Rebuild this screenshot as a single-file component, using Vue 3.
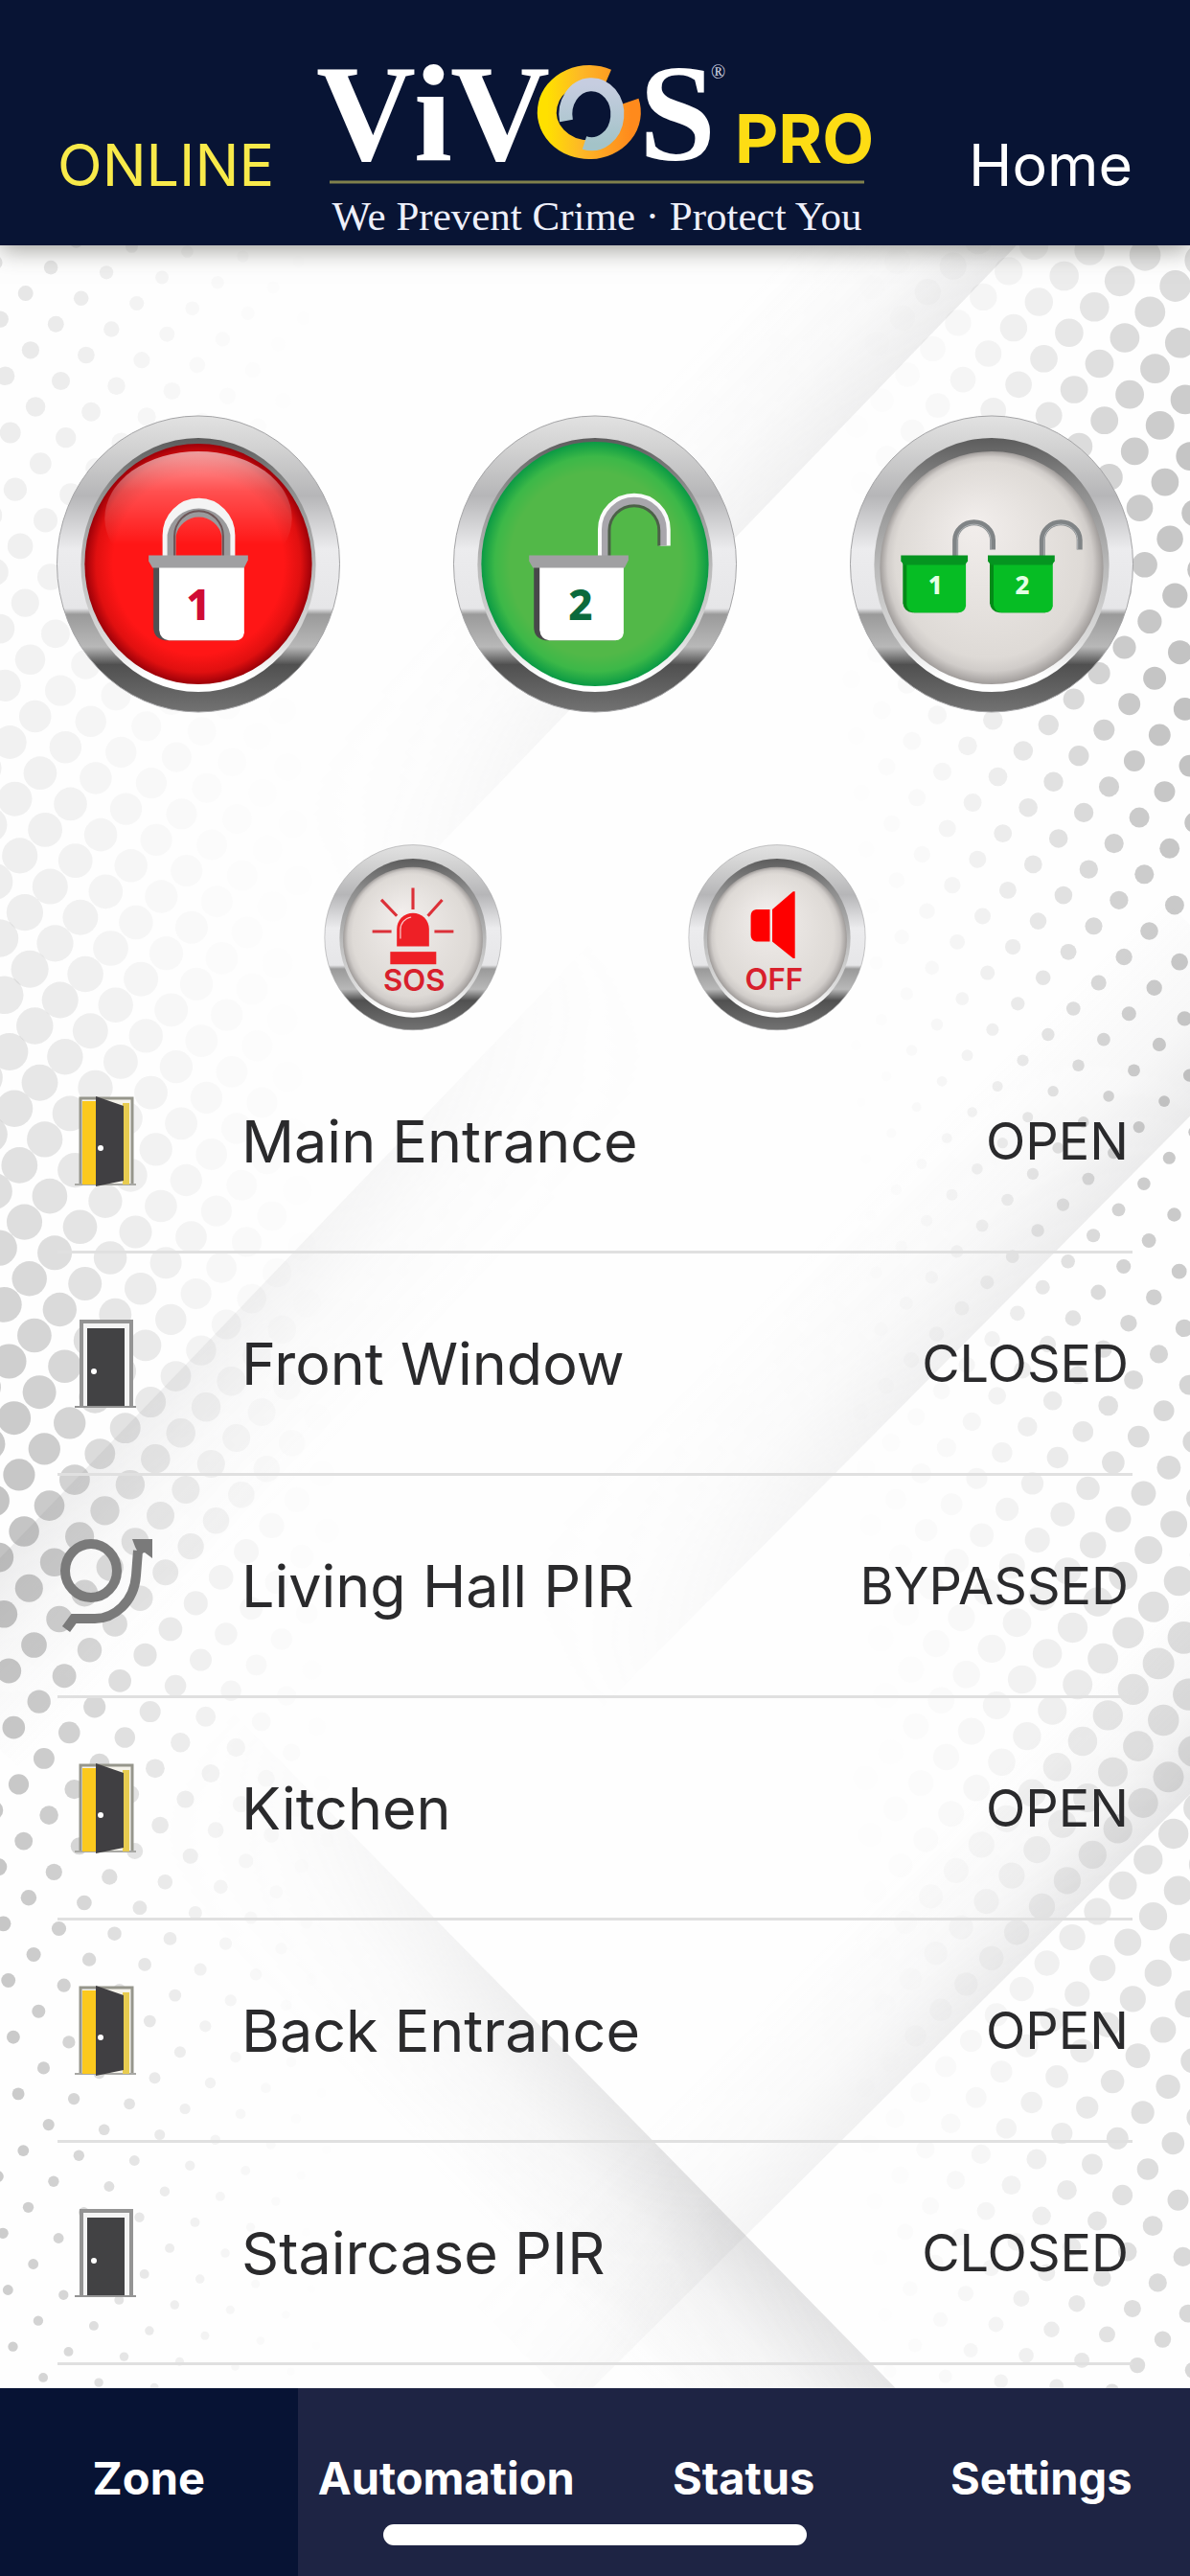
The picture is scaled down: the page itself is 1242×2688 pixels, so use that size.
<template>
  <div class="page">
    <!-- backdrop: soft diagonal folds and halftone dots -->
    <svg class="backdrop" viewBox="0 0 1242 2688" preserveAspectRatio="xMidYMid slice" aria-hidden="true">
      <defs>
        <template v-for="(f, i) in folds" :key="'g' + i">
          <linearGradient
            :id="'fold' + i"
            gradientUnits="userSpaceOnUse"
            :x1="f.a[0]"
            :y1="f.a[1]"
            :x2="f.a[0] + f.depth[0]"
            :y2="f.a[1] + f.depth[1]"
          >
            <stop offset="0" stop-color="#8a8a8e" :stop-opacity="f.shade" />
            <stop offset="0.4" stop-color="#8a8a8e" :stop-opacity="f.shade * 0.35" />
            <stop offset="1" stop-color="#8a8a8e" stop-opacity="0" />
          </linearGradient>
          <linearGradient
            :id="'along' + i"
            gradientUnits="userSpaceOnUse"
            :x1="f.a[0]"
            :y1="f.a[1]"
            :x2="f.b[0]"
            :y2="f.b[1]"
          >
            <stop v-for="s in f.along" :key="s[0]" :offset="s[0]" stop-color="#fff" :stop-opacity="s[1]" />
          </linearGradient>
          <mask :id="'mask' + i" maskUnits="userSpaceOnUse" x="-200" y="0" width="1642" height="2688">
            <rect x="-200" y="0" width="1642" height="2688" :fill="`url(#along${i})`" />
          </mask>
        </template>
        <linearGradient id="bezelRim" x1="0" y1="0" x2="0" y2="1">
          <stop offset="0" stop-color="#e2e2e2" />
          <stop offset="0.12" stop-color="#d0d0d0" />
          <stop offset="0.27" stop-color="#b6b6b8" />
          <stop offset="0.45" stop-color="#ececee" />
          <stop offset="0.65" stop-color="#e6e6e8" />
          <stop offset="0.67" stop-color="#9a9a9a" />
          <stop offset="0.78" stop-color="#b8b8b8" />
          <stop offset="0.84" stop-color="#505050" />
          <stop offset="1" stop-color="#727272" />
        </linearGradient>
        <linearGradient id="bezelLip" x1="0" y1="0" x2="0" y2="1">
          <stop offset="0" stop-color="#5c5c5c" />
          <stop offset="0.2" stop-color="#8c8c8c" />
          <stop offset="0.5" stop-color="#b8b8b8" />
          <stop offset="0.8" stop-color="#dcdcdc" />
          <stop offset="0.94" stop-color="#ffffff" />
        </linearGradient>
        <radialGradient id="faceRed">
          <stop offset="0.75" stop-color="#ff1616" />
          <stop offset="0.9" stop-color="#e01010" />
          <stop offset="1" stop-color="#9c0008" />
        </radialGradient>
        <radialGradient id="faceGreen">
          <stop offset="0.75" stop-color="#52b848" />
          <stop offset="0.88" stop-color="#3cb848" />
          <stop offset="1" stop-color="#0a9a44" />
        </radialGradient>
        <radialGradient id="faceGrey" cx="0.5" cy="0.5" r="0.5" fx="0.42" fy="0.3">
          <stop offset="0" stop-color="#f2eeec" />
          <stop offset="0.84" stop-color="#dedad6" />
          <stop offset="0.92" stop-color="#d0ccc9" />
          <stop offset="1" stop-color="#a09c9a" />
        </radialGradient>
        <linearGradient id="gloss" x1="0" y1="0" x2="0" y2="1">
          <stop offset="0" stop-color="#ffffff" stop-opacity="0.6" />
          <stop offset="0.3" stop-color="#ffffff" stop-opacity="0.25" />
          <stop offset="0.7" stop-color="#ffffff" stop-opacity="0" />
        </linearGradient>
        <symbol id="bezel" viewBox="0 0 298 313">
          <ellipse cx="149" cy="156" rx="148" ry="155" fill="url(#bezelRim)" stroke="#a4a4a6" stroke-width="1" />
          <ellipse cx="149" cy="157" rx="123" ry="133" fill="url(#bezelLip)" />
        </symbol>
      </defs>
      <polygon
        v-for="(f, i) in folds"
        :key="'f' + i"
        :points="foldPoints(f)"
        :fill="`url(#fold${i})`"
        :mask="`url(#mask${i})`"
      />
      <circle
        v-for="(d, i) in dots"
        :key="'d' + i"
        :cx="d.x"
        :cy="d.y"
        :r="d.r"
        fill="#8c8c8c"
        :fill-opacity="d.o"
      />
    </svg>

    <header class="top-bar">
      <span class="connection">ONLINE</span>
      <svg class="logo" viewBox="0 -40 600 230" role="img" aria-label="ViVOS PRO">
        <defs>
          <linearGradient id="ringWarm" x1="0" y1="0" x2="1" y2="0">
            <stop offset="0" stop-color="#ffe000" />
            <stop offset="0.4" stop-color="#fdb827" />
            <stop offset="1" stop-color="#ff8a1c" />
          </linearGradient>
          <linearGradient id="ringCool" x1="0" y1="0" x2="0" y2="1">
            <stop offset="0" stop-color="#c6cde0" />
            <stop offset="1" stop-color="#a3c3c8" />
          </linearGradient>
        </defs>
        <g class="logo-name">
          <text x="9" y="107">V</text>
          <text x="111" y="107">i</text>
          <text x="149" y="107">V</text>
          <text x="346" y="107">S</text>
        </g>
        <path d="M313 22 A44 39 0 1 0 336 46" fill="none" stroke="url(#ringWarm)" stroke-width="20" />
        <path d="M270 66 A27 31 0 1 1 289 89" fill="none" stroke="url(#ringCool)" stroke-width="14" />
        <text class="logo-mark" x="421" y="22">®</text>
        <text class="logo-pro" x="446" y="110">PRO</text>
        <path d="M23 130 H581" stroke="#80804c" stroke-width="3" />
        <text class="logo-tagline" x="302" y="180" text-anchor="middle">We Prevent Crime · Protect You</text>
      </svg>
      <h1 class="screen-title">Home</h1>
    </header>

    <main class="content">
      <div class="partitions">
        <button class="round-btn" aria-label="Partition 1 armed">
          <svg viewBox="0 0 298 313">
            <use href="#bezel" />
            <ellipse cx="149" cy="156" rx="119" ry="126" fill="url(#faceRed)" />
            <ellipse cx="149" cy="108" rx="98" ry="70" fill="url(#gloss)" />
            <g fill="none">
              <path d="M118 150 V126 A31 32 0 0 1 181 126 V150" stroke="#f4f4f4" stroke-width="13" />
              <path d="M121 150 V126 A29 29 0 0 1 178 126 V150" stroke="#9a9a9c" stroke-width="9" />
              <path d="M124 150 V127 A25 26 0 0 1 175 127 V150" stroke="#6c5557" stroke-width="2" />
            </g>
            <path d="M102 158 H190 V236 H114 Q102 234 102 222 Z" fill="#505052" />
            <path d="M108 158 H197 V228 Q196 236 188 236 H118 Q109 235 108 225 Z" fill="#ffffff" />
            <path d="M97 147 H201 V152 L197 160 H101 L97 153 Z" fill="#a0a0a2" />
            <text class="lock-num" x="149" y="215" fill="#d00c34">1</text>
          </svg>
        </button>
        <button class="round-btn" aria-label="Partition 2 disarmed">
          <svg viewBox="0 0 298 313">
            <use href="#bezel" />
            <ellipse cx="149" cy="156" rx="119" ry="128" fill="url(#faceGreen)" />
            <g fill="none">
              <path d="M158 150 V120 A32 32 0 0 1 222 120 V137" stroke="#fbfbfb" stroke-width="12" />
              <path d="M160 150 V120 A30 30 0 0 1 220 120 V137" stroke="#a8a6ac" stroke-width="8" />
              <path d="M164 150 V121 A26 26 0 0 1 216 121 V137" stroke="#4c6048" stroke-width="3" />
            </g>
            <path d="M85 158 H170 V236 H97 Q85 234 85 222 Z" fill="#48484a" />
            <path d="M91 158 H179 V228 Q178 236 170 236 H101 Q92 235 91 225 Z" fill="#ffffff" />
            <path d="M80 147 H184 V152 L180 160 H84 L80 153 Z" fill="#a0a0a2" />
            <text class="lock-num" x="134" y="215" fill="#0c6a3c">2</text>
          </svg>
        </button>
        <button class="round-btn" aria-label="Disarm partitions 1 and 2">
          <svg viewBox="0 0 298 313">
            <use href="#bezel" />
            <ellipse cx="149" cy="160" rx="117" ry="122" fill="url(#faceGrey)" />
            <g v-for="lock in [{ n: 1, x: 54 }, { n: 2, x: 145 }]" :key="lock.n" :transform="`translate(${lock.x} 0)`">
              <path d="M57 149 V131 A19 18 0 0 1 96 131 V141" fill="none" stroke="#808486" stroke-width="6" />
              <path d="M59 149 V131 A17 16 0 0 1 94 131 V141" fill="none" stroke="#b4b8ba" stroke-width="1" />
              <path d="M2 150 H60 V207 H12 Q3 206 2 197 Z" fill="#048a18" />
              <path d="M6 150 H68 V200 Q67 207 60 207 H14 Q7 206 6 199 Z" fill="#06bd24" />
              <path d="M0 147 H70 V153 L67 157 H3 L0 153 Z" fill="#059420" />
              <text class="lock-num small" x="36" y="188" fill="#e4ffe4">{{ lock.n }}</text>
            </g>
          </svg>
        </button>
      </div>

      <div class="alarms">
        <button class="round-btn compact">
          <svg viewBox="0 0 298 313">
            <use href="#bezel" />
            <ellipse cx="149" cy="160" rx="117" ry="122" fill="url(#faceGrey)" />
            <path d="M122 171 V142 A27 27 0 0 1 176 142 V171 Z" fill="#ee2026" />
            <path d="M128 158 V143 A21 21 0 0 1 146 122" fill="none" stroke="#f8c8c8" stroke-width="2" />
            <rect x="111" y="180" width="77" height="21" fill="#ee2026" />
            <path d="M149 73 V109 M96 93 L122 120 M198 93 L174 120 M81 146 H113 M185 146 H217" stroke="#dc3038" stroke-width="5" />
            <text class="alarm-label" x="151" y="245">SOS</text>
          </svg>
        </button>
        <button class="round-btn compact">
          <svg viewBox="0 0 298 313">
            <use href="#bezel" />
            <ellipse cx="149" cy="160" rx="117" ry="122" fill="url(#faceGrey)" />
            <path d="M137 109 V163 H114 Q105 161 105 152 V120 Q105 110 114 109 Z" fill="#fe0000" />
            <path d="M141 109 L176 79 H179 V191 H176 L141 163 Z" fill="#fe0000" />
            <text class="alarm-label" x="144" y="244">OFF</text>
          </svg>
        </button>
      </div>

      <ul class="zone-list">
        <li v-for="zone in zones" :key="zone.name" class="zone-row">
          <svg v-if="zone.state === 'OPEN'" class="door-icon" viewBox="0 0 64 94" aria-hidden="true">
            <path d="M6 91 V2 H60 V91" fill="#f4f2ea" stroke="#96968c" stroke-width="3" />
            <path d="M0 92 H64" stroke="#a8a8a4" stroke-width="2" />
            <path d="M8 5 H22 V92 H8 Z" fill="#fbc91e" />
            <path d="M50 7 H57 V92 H50 Z" fill="#e8cc50" />
            <path d="M22 0 L51 10 V88 L22 94 Z" fill="#403f42" />
            <circle cx="27" cy="54" r="3" fill="#ffffff" />
          </svg>
          <svg v-else-if="zone.state === 'CLOSED'" class="door-icon" viewBox="0 0 64 94" aria-hidden="true">
            <path d="M7 91 V3 H59 V91" fill="#f4f4f4" stroke="#949494" stroke-width="4" />
            <path d="M0 92 H64" stroke="#949494" stroke-width="2" />
            <path d="M13 10 H52 V91 H13 Z" fill="#424244" />
            <circle cx="20" cy="55" r="3" fill="#ffffff" />
          </svg>
          <svg v-else class="bypass-icon" viewBox="0 0 98 98" aria-hidden="true">
            <g fill="none" stroke="#7a7a7a" stroke-width="10">
              <ellipse cx="34" cy="33" rx="27" ry="28" />
              <path d="M8 94 L16 83 H38 C58 83 79 66 81 38 L83 12" />
            </g>
            <path d="M77 0 H98 V20 L90 14 L84 16 L80 8 Z" fill="#7a7a7a" />
          </svg>
          <span class="zone-name">{{ zone.name }}</span>
          <span class="zone-state">{{ zone.state }}</span>
        </li>
      </ul>
    </main>

    <nav class="tab-bar">
      <button
        v-for="tab in tabs"
        :key="tab"
        class="tab"
        :class="{ active: tab === activeTab }"
        @click="activeTab = tab"
      >
        {{ tab }}
      </button>
      <span class="home-indicator"></span>
    </nav>
  </div>
</template>

<script setup>
import { ref } from 'vue'

const tabs = ['Zone', 'Automation', 'Status', 'Settings']
const activeTab = ref('Zone')

const zones = [
  { name: 'Main Entrance', state: 'OPEN' },
  { name: 'Front Window', state: 'CLOSED' },
  { name: 'Living Hall PIR', state: 'BYPASSED' },
  { name: 'Kitchen', state: 'OPEN' },
  { name: 'Back Entrance', state: 'OPEN' },
  { name: 'Staircase PIR', state: 'CLOSED' }
]

// each fold runs from a to b and fades out over depth; along is [offset, opacity]
const folds = [
  {
    a: [1160, 153],
    b: [380, 964],
    depth: [-120, -115],
    shade: 0.18,
    along: [
      [0, 1],
      [0.45, 0.6],
      [0.7, 0.45],
      [1, 0]
    ]
  },
  {
    a: [1342, 1064],
    b: [586, 1825],
    depth: [-130, -129],
    shade: 0.17,
    along: [
      [0.1, 1],
      [0.5, 0.7],
      [0.95, 0]
    ]
  },
  {
    a: [620, 980],
    b: [-100, 1730],
    depth: [120, 115],
    shade: 0.18,
    along: [
      [0, 0],
      [0.3, 0.35],
      [0.7, 0.7],
      [1, 1]
    ]
  },
  {
    a: [1342, 1773],
    b: [600, 2510],
    depth: [-110, -111],
    shade: 0.22,
    along: [
      [0.1, 1],
      [0.6, 0.5],
      [0.9, 0.25],
      [1, 0.2]
    ]
  },
  {
    a: [240, 1784],
    b: [974, 2532],
    depth: [-130, 127],
    shade: 0.28,
    along: [
      [0, 0],
      [0.3, 0.3],
      [0.7, 0.9],
      [1, 0.7]
    ]
  }
]

const foldPoints = ({ a, b, depth }) =>
  [a, b, [b[0] + depth[0], b[1] + depth[1]], [a[0] + depth[0], a[1] + depth[1]]].map((p) => p.join(',')).join(' ')

// [y, radius, strength]
const leftCurve = [
  [250, 7, 0.24],
  [500, 12, 0.13],
  [730, 17, 0.11],
  [1000, 20, 0.16],
  [1250, 19, 0.28],
  [1450, 18, 0.44],
  [1600, 16, 0.54],
  [1800, 12, 0.5],
  [2000, 8, 0.48],
  [2250, 6, 0.46],
  [2500, 5, 0.4]
]
const rightCurve = [
  [250, 17, 0.24],
  [470, 15, 0.5],
  [730, 12, 0.55],
  [950, 10, 0.48],
  [1150, 6, 0.5],
  [1330, 8, 0.46],
  [1470, 11, 0.34],
  [1700, 17, 0.28],
  [1900, 16, 0.27],
  [2100, 14, 0.27],
  [2300, 11, 0.32],
  [2500, 8, 0.34]
]

const sample = (curve, y) => {
  const next = curve.findIndex((c) => c[0] > y)
  if (next <= 0) return curve[next === 0 ? 0 : curve.length - 1].slice(1)
  const [y0, r0, s0] = curve[next - 1]
  const [y1, r1, s1] = curve[next]
  const t = (y - y0) / (y1 - y0)
  return [r0 + (r1 - r0) * t, s0 + (s1 - s0) * t]
}

const halftone = (origin, curve, edge, reach) => {
  const out = []
  for (let i = -60; i <= 60; i++) {
    for (let j = -90; j <= 90; j++) {
      const x = origin[0] + i * 58 + j * 26.4
      const y = origin[1] + i * 5.2 - j * 27
      const fade = 1 - Math.abs(x - edge) / reach
      if (x < -20 || x > 1262 || y < 250 || y > 2500 || fade <= 0) continue
      const [r, strength] = sample(curve, y)
      out.push({ x, y, r: r * (0.75 + fade * 0.25), o: (strength * Math.min(1, fade * 1.2) * fade).toFixed(3) })
    }
  }
  return out
}

const dots = [...halftone([93.5, 1721.7], leftCurve, 0, 380), ...halftone([1230.7, 1326.7], rightCurve, 1242, 390)]
</script>

<style>
body {
  margin: 0;
}
</style>

<style scoped>
.page {
  position: relative;
  display: flex;
  flex-direction: column;
  min-height: 100vh;
  overflow: hidden;
  background: #fefefe;
  color: #2a2a2c;
  font-family: Inter, 'Liberation Sans', sans-serif;
}

.backdrop {
  position: absolute;
  inset: 0;
  width: 100%;
  height: 100%;
}

button {
  padding: 0;
  border: none;
  background: none;
  font-family: inherit;
  cursor: pointer;
}

.top-bar {
  position: relative;
  display: grid;
  grid-template-columns: 1fr 600px 1fr;
  align-items: end;
  padding: 20px 60px 6px;
  background: #081434;
  box-shadow: 0 4px 24px rgba(60, 60, 50, 0.5);
}

.connection,
.screen-title {
  margin: 0 0 42px;
  font-size: 61px;
  font-weight: 400;
  line-height: 72px;
}

.connection {
  color: #f8ea4a;
}

.screen-title {
  color: #fff;
  text-align: right;
}

.logo {
  display: block;
  width: 100%;
  height: 230px;
}

.logo-name {
  font-family: 'Liberation Serif', serif;
  font-size: 144px;
  font-weight: 700;
  fill: #fff;
}

.logo-mark {
  font-family: 'Liberation Serif', serif;
  font-size: 20px;
  fill: #d8dce8;
}

.logo-pro {
  font-size: 70px;
  font-weight: 700;
  fill: #fddc14;
}

.logo-tagline {
  font-family: 'Liberation Serif', serif;
  font-size: 43px;
  fill: #eef0fa;
}

.content {
  position: relative;
  flex: 1;
  padding: 177px 60px 0;
}

.partitions {
  display: flex;
  justify-content: space-between;
  margin: 0 -2px 136px;
}

.alarms {
  display: flex;
  justify-content: center;
  gap: 194px;
}

.round-btn {
  width: 298px;
  height: 312px;
}

.round-btn.compact {
  width: 186px;
  height: 195px;
}

.round-btn svg {
  display: block;
  width: 100%;
  height: 100%;
}

.lock-num {
  font-family: 'Noto Sans', sans-serif;
  font-size: 44px;
  font-weight: 800;
  text-anchor: middle;
}

.lock-num.small {
  font-size: 26px;
}

.alarm-label {
  font-size: 50px;
  font-weight: 600;
  fill: #d8202c;
  text-anchor: middle;
}

.zone-list {
  margin: 0;
  padding: 0;
  list-style: none;
}

.zone-row {
  display: grid;
  grid-template-columns: 100px 1fr auto;
  align-items: center;
  box-sizing: border-box;
  height: 232px;
  padding-right: 4px;
  border-bottom: 3px solid #e0e0e0;
}

.door-icon {
  justify-self: center;
  width: 64px;
  height: 94px;
}

.bypass-icon {
  justify-self: center;
  width: 98px;
  height: 98px;
}

.zone-name {
  padding-left: 92px;
  font-size: 61px;
}

.zone-state {
  font-size: 54px;
}

.tab-bar {
  position: relative;
  display: grid;
  grid-template-columns: repeat(4, 1fr);
  height: 196px;
  background: #1e2444;
}

.tab {
  padding-bottom: 10px;
  color: #fff;
  font-size: 47px;
  font-weight: 700;
}

.tab.active {
  background: #071334;
}

.home-indicator {
  position: absolute;
  bottom: 32px;
  left: 50%;
  width: 442px;
  height: 22px;
  border-radius: 11px;
  background: #fff;
  transform: translateX(-50%);
}
</style>
